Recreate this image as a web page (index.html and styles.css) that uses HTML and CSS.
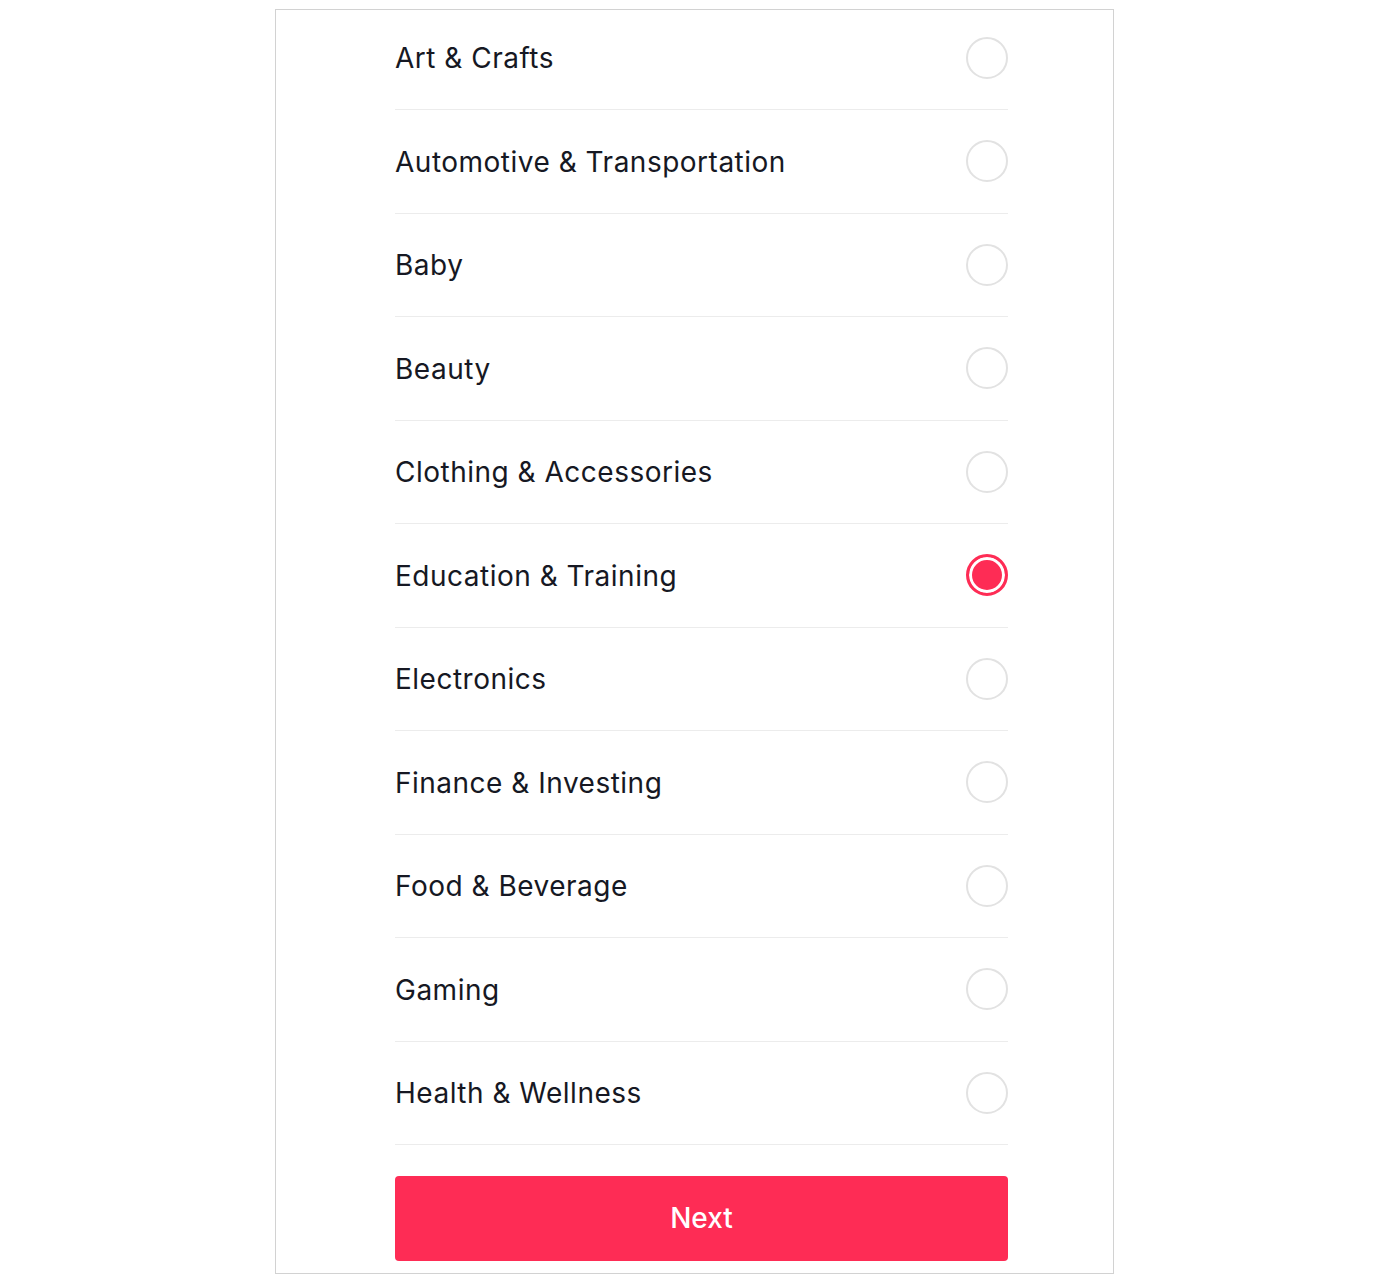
FILE: index.html
```html
<!DOCTYPE html>
<html lang="en">
<head>
    <meta charset="UTF-8">
    <title>Choose a category</title>
    <link rel="stylesheet" href="styles.css">
</head>
<body>
    <div class="frame">
        <ul class="options">
            <li class="option"><span>Art &amp; Crafts</span><i class="radio"></i></li>
            <li class="option"><span>Automotive &amp; Transportation</span><i class="radio"></i></li>
            <li class="option"><span>Baby</span><i class="radio"></i></li>
            <li class="option"><span>Beauty</span><i class="radio"></i></li>
            <li class="option"><span>Clothing &amp; Accessories</span><i class="radio"></i></li>
            <li class="option"><span>Education &amp; Training</span><i class="radio checked"></i></li>
            <li class="option"><span>Electronics</span><i class="radio"></i></li>
            <li class="option"><span>Finance &amp; Investing</span><i class="radio"></i></li>
            <li class="option"><span>Food &amp; Beverage</span><i class="radio"></i></li>
            <li class="option"><span>Gaming</span><i class="radio"></i></li>
            <li class="option"><span>Health &amp; Wellness</span><i class="radio"></i></li>
        </ul>
        <button class="next">Next</button>
    </div>
</body>
</html>
```

FILE: styles.css
```css
body {
    margin: 0;
    background-color: #ffffff;
    font-family: 'Inter', 'Liberation Sans', sans-serif;
    color: #161823;
}
.frame {
    box-sizing: border-box;
    width: 839px;
    height: 1265px;
    margin: 9px 0 0 275px;
    border: 1px solid #d2d2d2;
    overflow: hidden;
    padding: 0 105px 0 119px;
}
.options {
    list-style-type: none;
    margin: -3.5px 0 0 0;
    padding: 0;
}
.option {
    box-sizing: border-box;
    height: 103.5px;
    display: flex;
    align-items: center;
    justify-content: space-between;
    border-bottom: 1px solid #ececec;
    font-size: 28px;
    letter-spacing: 0.5px;
}
.option span {
    padding-top: 1px;
}
.radio {
    box-sizing: border-box;
    width: 42px;
    height: 42px;
    border: 2px solid #e2e2e2;
    border-radius: 50%;
}
.radio.checked {
    border: 3px solid #fe2c55;
    background-color: #fe2c55;
    box-shadow: inset 0 0 0 3px #ffffff;
}
.next {
    display: block;
    width: 100%;
    height: 85px;
    margin-top: 30.5px;
    border: none;
    border-radius: 4px;
    background-color: #fe2c55;
    color: #ffffff;
    font-family: inherit;
    font-size: 28px;
    font-weight: 500;
    cursor: pointer;
}
```
